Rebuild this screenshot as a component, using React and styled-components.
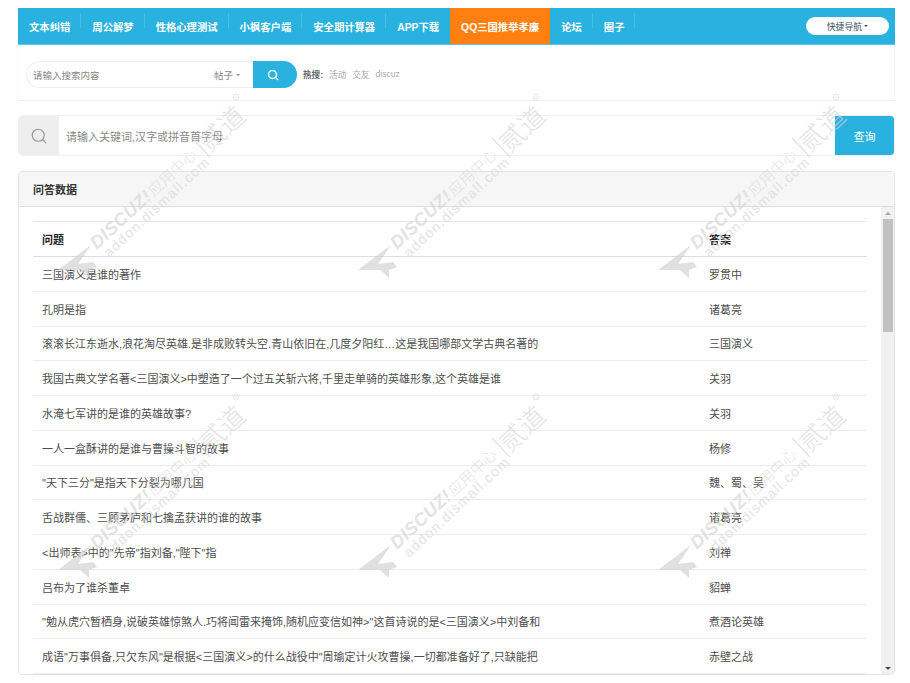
import React from "react";
import styled, { createGlobalStyle } from "styled-components";
import { Search } from "lucide-react";

const GlobalStyle = createGlobalStyle`
  * { box-sizing: border-box; }
  html, body {
    margin: 0;
    height: 100%;
    overflow: hidden;
    background: #fff;
    font-family: "Liberation Sans", "Noto Sans CJK SC", sans-serif;
  }
`;

const Page = styled.div`
  position: relative;
  height: 683px;
  padding: 8px 15px 0 18px;
  overflow: hidden;
`;

const NavBar = styled.div`
  display: flex;
  align-items: center;
  height: 37px;
  background: #29b1e0;
  border-bottom: 1px solid #5cc5ea;
`;

const NavItem = styled.a`
  display: flex;
  align-items: center;
  height: 36px;
  padding: 0 11px;
  font-size: 10.33px;
  font-weight: 700;
  color: #fff;
  white-space: nowrap;
  position: relative;
  background: ${(p) => (p.$active ? "#ff7f11" : "transparent")};
  &::after {
    content: "";
    display: ${(p) => (p.$plain ? "none" : "block")};
    position: absolute;
    right: 0;
    top: 5px;
    height: 15px;
    width: 1px;
    background: #4bbde5;
  }
`;

const QuickNav = styled.div`
  display: flex;
  align-items: center;
  justify-content: flex-end;
  margin-left: auto;
  margin-right: 6px;
  width: 83px;
  height: 18px;
  padding-right: 21px;
  border-radius: 9px;
  background: #fff;
  color: #44506a;
  font-size: 8.8px;
  gap: 2px;
`;

const Caret = styled.i`
  display: inline-block;
  width: 0;
  height: 0;
  border-left: 2px solid transparent;
  border-right: 2px solid transparent;
  border-top: 2px solid ${(p) => p.$color || "#888"};
`;

const SearchPanel = styled.div`
  display: flex;
  align-items: center;
  height: 56px;
  padding: 4px 0 0 7px;
  border-bottom: 1px solid #f0f0f0;
  border-left: 1px solid #f8f8f8;
  border-right: 1px solid #f5f5f5;
`;

const Pill = styled.div`
  display: flex;
  align-items: stretch;
  width: 271px;
  height: 27px;
`;

const PillInput = styled.div`
  flex: 1;
  display: flex;
  align-items: center;
  justify-content: space-between;
  padding: 0 13px 0 6px;
  border: 1px solid #eee;
  border-right: none;
  border-radius: 14px 0 0 14px;
  font-size: 9.5px;
  color: #888;
`;

const PillType = styled.span`
  display: flex;
  align-items: center;
  gap: 3px;
`;

const PillButton = styled.div`
  width: 44px;
  display: flex;
  align-items: center;
  justify-content: center;
  padding-right: 4px;
  background: #29b1e0;
  border-radius: 0 14px 14px 0;
  color: #fff;
`;

const HotLinks = styled.div`
  display: flex;
  align-items: center;
  gap: 6px;
  margin: -1px 0 0 6px;
  font-size: 8.6px;
  color: #aaa;
  b {
    color: #666;
  }
`;

const QueryBar = styled.div`
  display: flex;
  align-items: stretch;
  height: 41px;
  margin-top: 14px;
  border: 1px solid #f0f0f0;
  border-radius: 5px;
  overflow: hidden;
`;

const QueryIcon = styled.div`
  width: 40px;
  display: flex;
  align-items: center;
  justify-content: center;
  background: #eeeeee;
  color: #9a9a9a;
`;

const QueryInput = styled.div`
  flex: 1;
  display: flex;
  align-items: center;
  padding-left: 7px;
  font-size: 11px;
  color: #888;
`;

const QueryButton = styled.div`
  width: 59px;
  display: flex;
  align-items: center;
  justify-content: center;
  background: #29b1e0;
  color: #fff;
  font-size: 11px;
`;

const Panel = styled.div`
  margin-top: 15px;
  height: 504px;
  border: 1px solid #e4e4e4;
  border-radius: 4px;
  overflow: hidden;
`;

const PanelHeader = styled.div`
  display: flex;
  align-items: center;
  height: 35px;
  padding-left: 14px;
  background: #f6f6f6;
  border-bottom: 1px solid #dcdcdc;
  font-size: 11px;
  font-weight: 700;
  color: #333;
`;

const PanelBody = styled.div`
  display: flex;
  height: 467px;
`;

const TableArea = styled.div`
  flex: 1;
  padding: 14px 15px 0 14px;
  overflow: hidden;
`;

const Table = styled.table`
  width: 834px;
  border-collapse: collapse;
  table-layout: fixed;
  font-size: 11px;
  color: #4d4d4d;
`;

const Th = styled.th`
  height: 35px;
  padding: 0 0 0 9px;
  text-align: left;
  font-weight: 700;
  color: #222;
  border-top: 1px solid #e8e8e8;
  border-bottom: 1px solid #d9dde4;
  width: ${(p) => p.$width || "auto"};
`;

const Td = styled.td`
  height: 34.75px;
  padding: 0 0 0 9px;
  border-bottom: 1px solid #ececec;
  white-space: nowrap;
  overflow: hidden;
`;

const ScrollTrack = styled.div`
  width: 13px;
  display: flex;
  flex-direction: column;
  align-items: center;
  background: #f1f1f1;
`;

const ScrollArrow = styled.div`
  height: 12px;
  flex: none;
  display: flex;
  align-items: center;
  justify-content: center;
  width: 100%;
`;

const ArrowShape = styled.i`
  width: 0;
  height: 0;
  border-left: 3px solid transparent;
  border-right: 3px solid transparent;
  ${(p) => (p.$up ? "border-bottom: 3px solid #a3a3a3;" : "border-top: 3px solid #505050;")}
`;

const ScrollThumb = styled.div`
  width: 10px;
  height: 113px;
  background: #c1c1c1;
`;

const ScrollRest = styled.div`
  flex: 1;
`;

const WatermarkLayer = styled.div`
  position: absolute;
  left: 50px;
  top: 90px;
  display: grid;
  grid-template-columns: repeat(3, 300px);
  grid-auto-rows: 300px;
  pointer-events: none;
`;

const links = [
  "文本纠错",
  "周公解梦",
  "性格心理测试",
  "小枫客户端",
  "安全期计算器",
  "APP下载",
];

const rows = [
  ["三国演义是谁的著作", "罗贯中"],
  ["孔明是指", "诸葛亮"],
  ["滚滚长江东逝水,浪花淘尽英雄.是非成败转头空.青山依旧在,几度夕阳红…这是我国哪部文学古典名著的", "三国演义"],
  ["我国古典文学名著<三国演义>中塑造了一个过五关斩六将,千里走单骑的英雄形象,这个英雄是谁", "关羽"],
  ["水淹七军讲的是谁的英雄故事?", "关羽"],
  ["一人一盒酥讲的是谁与曹操斗智的故事", "杨修"],
  ["\"天下三分\"是指天下分裂为哪几国", "魏、蜀、吴"],
  ["舌战群儒、三顾茅庐和七擒孟获讲的谁的故事", "诸葛亮"],
  ["<出师表>中的\"先帝\"指刘备,\"陛下\"指", "刘禅"],
  ["吕布为了谁杀董卓", "貂蝉"],
  ["\"勉从虎穴暂栖身,说破英雄惊煞人.巧将闻雷来掩饰,随机应变信如神>\"这首诗说的是<三国演义>中刘备和", "煮酒论英雄"],
  ["成语\"万事俱备,只欠东风\"是根据<三国演义>的什么战役中\"周瑜定计火攻曹操,一切都准备好了,只缺能把", "赤壁之战"],
];

function Watermark() {
  return (
    <svg width="300" height="300" viewBox="0 0 300 300" fill="#d8d8d8" opacity="0.7">
      <polygon points="8,180 41,155 28,174 43,172 47,177 39,180 39,188 30,180" fill="#d4d4d4" />
      <g transform="translate(47,160) rotate(-43)">
        <text fontFamily="Liberation Sans" fontSize="18" fontWeight="700" fontStyle="italic" textLength="76">DISCUZ!</text>
        <text x="78" fontFamily="Noto Sans CJK SC" fontSize="15" fontWeight="300">应用中心</text>
      </g>
      <g transform="translate(59,168) rotate(-43)">
        <text fontFamily="Liberation Sans" fontSize="14" textLength="138">addon.dismall.com</text>
      </g>
      <line x1="142" y1="48" x2="160" y2="67" stroke="#d4d4d4" strokeWidth="1.2" />
      <g transform="translate(159.6,63.5) rotate(-43)">
        <text fontFamily="Noto Sans CJK SC" fontSize="26" fontWeight="300">贰道</text>
      </g>
      <circle cx="186" cy="7" r="3" fill="none" stroke="#d4d4d4" strokeWidth="0.8" />
      <text x="184.6" y="8.6" fontFamily="Liberation Sans" fontSize="4">R</text>
    </svg>
  );
}

export default function App() {
  return (
    <>
      <GlobalStyle />
      <Page>
        <NavBar>
          {links.map((l, i) => (
            <NavItem key={l} $plain={i === links.length - 1}>{l}</NavItem>
          ))}
          <NavItem $active $plain>QQ三国推举孝廉</NavItem>
          <NavItem>论坛</NavItem>
          <NavItem>圈子</NavItem>
          <QuickNav>快捷导航 <Caret $color="#44506a" /></QuickNav>
        </NavBar>

        <SearchPanel>
          <Pill>
            <PillInput>
              <span>请输入搜索内容</span>
              <PillType>帖子 <Caret /></PillType>
            </PillInput>
            <PillButton><Search size={12} strokeWidth={3} /></PillButton>
          </Pill>
          <HotLinks>
            <b>热搜:</b>
            <span>活动</span>
            <span>交友</span>
            <span>discuz</span>
          </HotLinks>
        </SearchPanel>

        <QueryBar>
          <QueryIcon><Search size={18} strokeWidth={1.6} /></QueryIcon>
          <QueryInput>请输入关键词,汉字或拼音首字母</QueryInput>
          <QueryButton>查询</QueryButton>
        </QueryBar>

        <Panel>
          <PanelHeader>问答数据</PanelHeader>
          <PanelBody>
            <TableArea>
              <Table>
                <thead>
                  <tr>
                    <Th $width="667px">问题</Th>
                    <Th>答案</Th>
                  </tr>
                </thead>
                <tbody>
                  {rows.map((r) => (
                    <tr key={r[0]}>
                      <Td>{r[0]}</Td>
                      <Td>{r[1]}</Td>
                    </tr>
                  ))}
                </tbody>
              </Table>
            </TableArea>
            <ScrollTrack>
              <ScrollArrow><ArrowShape $up /></ScrollArrow>
              <ScrollThumb />
              <ScrollRest />
              <ScrollArrow><ArrowShape /></ScrollArrow>
            </ScrollTrack>
          </PanelBody>
        </Panel>

        <WatermarkLayer>
          {[0, 1, 2, 3, 4, 5].map((n) => <Watermark key={n} />)}
        </WatermarkLayer>
      </Page>
    </>
  );
}
